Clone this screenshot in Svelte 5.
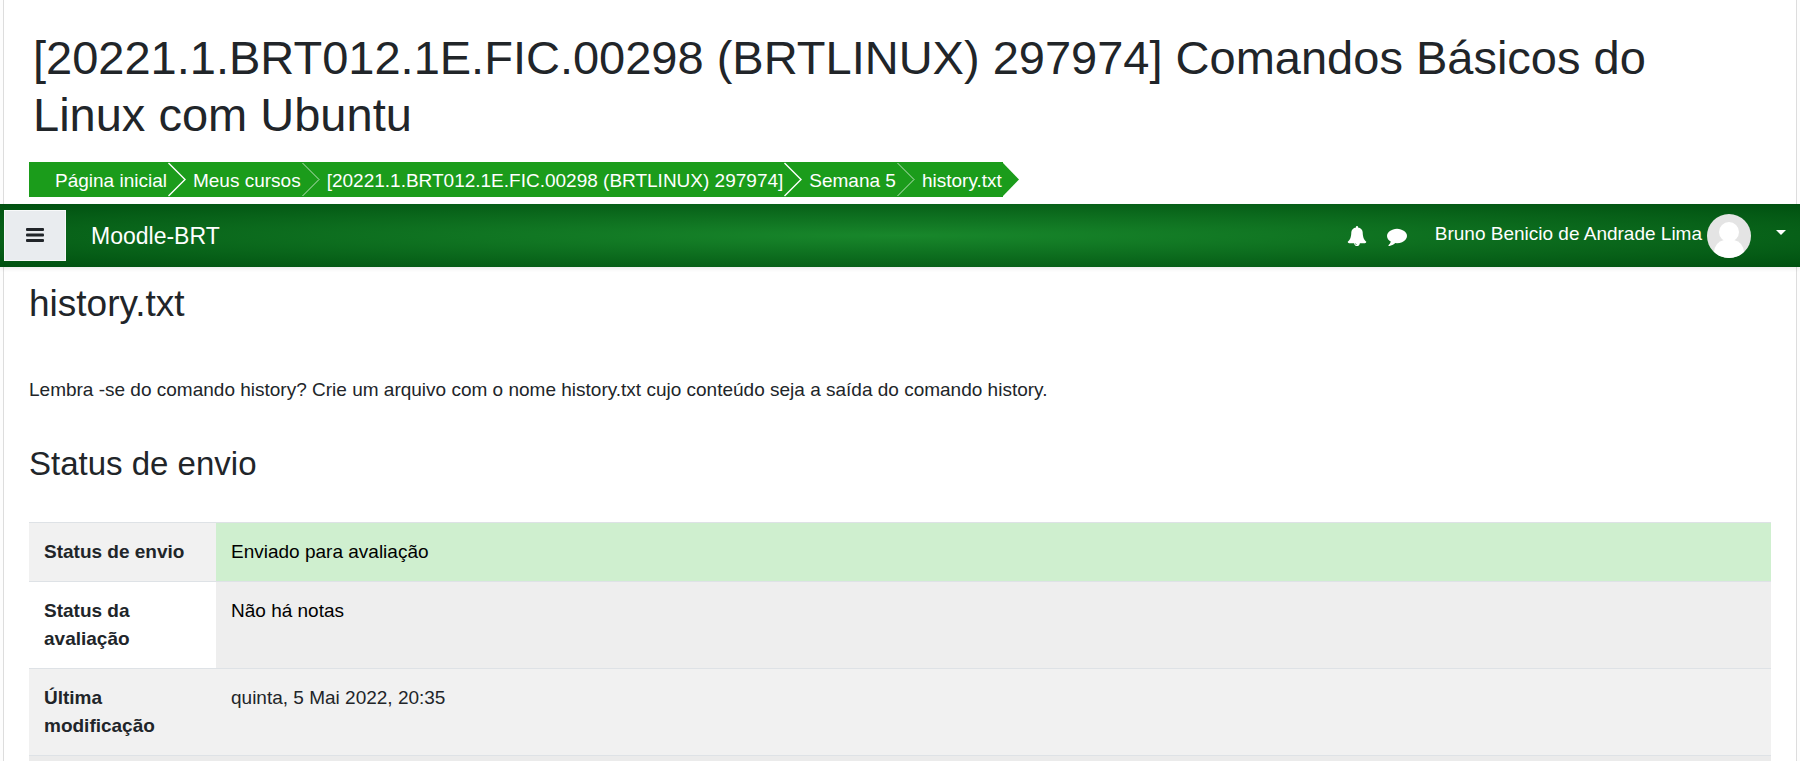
<script>
  const crumbs = [
    'Página inicial',
    'Meus cursos',
    '[20221.1.BRT012.1E.FIC.00298 (BRTLINUX) 297974]',
    'Semana 5',
    'history.txt'
  ];
  const rows = [
    { label: 'Status de envio', value: 'Enviado para avaliação', kind: 'submitted' },
    { label: 'Status da avaliação', value: 'Não há notas', kind: 'ungraded' },
    { label: 'Última modificação', value: 'quinta, 5 Mai 2022, 20:35', kind: '' },
    { label: '', value: '', kind: 'hovered' }
  ];
</script>

<div class="page">
  <header>
    <h1>[20221.1.BRT012.1E.FIC.00298 (BRTLINUX) 297974] Comandos Básicos do Linux com Ubuntu</h1>
    <nav aria-label="Breadcrumb">
      <ol class="crumbs">
        {#each crumbs as crumb, i}
          <li>
            <a href="#top">{crumb}</a>
            {#if i < crumbs.length - 1}
              <svg class="sep" class:faint={i % 2 === 1} width="18" height="35" viewBox="0 0 18 35" aria-hidden="true">
                <path d="M0.5 1L17 17.5L0.5 34" />
              </svg>
            {/if}
          </li>
        {/each}
      </ol>
      <svg class="tip" width="16" height="35" viewBox="0 0 16 35" aria-hidden="true">
        <path d="M0 1L16 17.5L0 34Z" />
      </svg>
    </nav>
  </header>

  <div class="navbar">
    <button class="menu" aria-label="Menu">
      <svg width="18" height="15" viewBox="0 0 18 15" aria-hidden="true">
        <rect width="18" height="3" rx="1" /><rect y="5.5" width="18" height="3" rx="1" /><rect y="11" width="18" height="3" rx="1" />
      </svg>
    </button>
    <a class="brand" href="#home">Moodle-BRT</a>
    <button class="icon" aria-label="Notificações">
      <svg width="20" height="20" viewBox="0 0 1792 1792" aria-hidden="true">
        <path fill-rule="evenodd" d="M912 1696q0-16-16-16-59 0-101.5-42.5t-42.5-101.5q0-16-16-16t-16 16q0 73 51.5 124.5t124.5 51.5q16 0 16-16zm816-288q0 52-38 90t-90 38h-448q0 106-75 181t-181 75-181-75-75-181h-448q-52 0-90-38t-38-90q50-42 91-88t85-119.5 74.5-158.5 50-206 19.5-260q0-152 117-282.5t307-158.5q-8-19-8-39 0-40 28-68t68-28 68 28 28 68q0 20-8 39 190 28 307 158.5t117 282.5q0 139 19.5 260t50 206 74.5 158.5 85 119.5 91 88z" />
      </svg>
    </button>
    <button class="icon" aria-label="Mensagens">
      <svg width="20" height="20" viewBox="0 0 1792 1792" aria-hidden="true">
        <path d="M1792 896q0 174-120 321.5t-326 233-450 85.5q-70 0-145-8-198 175-460 242-49 14-114 22-17 2-30.5-9t-17.5-29v-1q-3-4-.5-12t2-10 4.5-9.5l6-9 7-8.5 8-9q7-8 31-34.5t34.5-38 31-39.5 32.5-51 27-59 26-76q-157-89-247.5-220t-90.5-281q0-130 71-248.5t191-204.5 286-136.5 348-50.5 348 50.5 286 136.5 191 204.5 71 248.5z" />
      </svg>
    </button>
    <button class="user">
      <span class="name">Bruno Benicio de Andrade Lima</span>
      <svg class="avatar" width="44" height="44" viewBox="0 0 44 44" aria-hidden="true">
        <defs><clipPath id="round"><circle cx="22" cy="22" r="22" /></clipPath></defs>
        <g clip-path="url(#round)">
          <rect width="44" height="44" fill="#e4e4e4" />
          <circle cx="22" cy="18" r="10" />
          <path d="M7 44V38Q8 28 17 26H27Q36 28 37 38V44Z" />
        </g>
      </svg>
      <svg class="caret" width="10" height="5" viewBox="0 0 10 5" aria-hidden="true"><path d="M0 0H10L5 5Z" /></svg>
    </button>
  </div>

  <main>
    <h2>history.txt</h2>
    <p>Lembra -se do comando history? Crie um arquivo com o nome history.txt cujo conteúdo seja a saída do comando history.</p>
    <h3>Status de envio</h3>
    <table>
      <tbody>
        {#each rows as row}
          <tr class={row.kind}>
            <th scope="row">{row.label}</th>
            <td>{row.value}</td>
          </tr>
        {/each}
      </tbody>
    </table>
  </main>
</div>

<style>
  :global(body) {
    background: #fdfdfd;
    color: #212529;
    font: 19px/28px "Liberation Sans", Arial, sans-serif;
  }
  .page {
    box-sizing: border-box;
    height: 100vh;
    margin: 0 3px;
    border: solid #ddd;
    border-width: 0 1px;
    background: #fff;
    overflow: clip;
    overflow-clip-margin: 4px;
  }
  header {
    padding: 29px 25px 7px;
  }
  h1, h2, h3 {
    margin: 0;
    font-weight: 400;
  }
  h1 {
    padding: 0 4px;
    margin-bottom: 19px;
    font-size: 47px;
    line-height: 57px;
  }
  nav {
    display: flex;
  }
  .crumbs {
    display: flex;
    margin: 0;
    padding: 0 0 0 19px;
    list-style: none;
    background: #1b9c1b;
  }
  li {
    display: flex;
    padding-left: 7px;
  }
  li a {
    padding: 5px 1px 2px 0;
    color: #fff;
    text-decoration: none;
  }
  .sep path {
    fill: none;
    stroke: #fff;
    stroke-width: 1.4;
  }
  .faint path {
    stroke-width: 0.7;
  }
  .tip {
    fill: #1b9c1b;
  }
  .navbar {
    position: relative;
    display: flex;
    align-items: center;
    box-sizing: border-box;
    height: 63px;
    margin: 0 -4px;
    padding: 0 14px 0 4px;
    background: radial-gradient(ellipse, #18872b, #005010);
    box-shadow: 0 2px 4px rgba(0, 0, 0, 0.08);
    color: #fff;
  }
  button {
    padding: 0;
    border: 0;
    background: none;
    color: inherit;
    font: inherit;
  }
  .menu {
    display: flex;
    align-items: center;
    justify-content: center;
    width: 62px;
    height: 51px;
    border: 1px solid #f8f9fa;
    background: #e9ecef;
    fill: #212529;
  }
  .brand {
    margin: 0 auto 0 25px;
    color: #fff;
    font-size: 23px;
    text-decoration: none;
  }
  .icon {
    display: flex;
    margin-right: 20px;
    fill: #fff;
  }
  .user {
    display: flex;
    align-items: center;
    margin-left: 8px;
    fill: #fff;
  }
  .name {
    margin-right: 5px;
    padding-bottom: 4px;
  }
  .caret {
    margin: 0 0 7px 25px;
  }
  main {
    padding: 14px 25px 0;
  }
  h2 {
    font-size: 37px;
    line-height: 46px;
  }
  p {
    margin: 49px 0 40px;
  }
  h3 {
    margin-bottom: 38px;
    font-size: 33px;
    line-height: 40px;
  }
  table {
    width: 100%;
    border-spacing: 0;
    table-layout: fixed;
  }
  th, td {
    height: 28px;
    padding: 15px;
    border-top: 1px solid #dee2e6;
    text-align: left;
    vertical-align: top;
  }
  th {
    width: 157px;
  }
  tr:nth-child(odd) {
    background: #f1f1f1;
  }
  .submitted td {
    background: #cfefcf;
    color: #000;
  }
  .ungraded td {
    background: #eee;
    color: #000;
  }
  .hovered {
    background: #ebebeb;
  }
</style>
